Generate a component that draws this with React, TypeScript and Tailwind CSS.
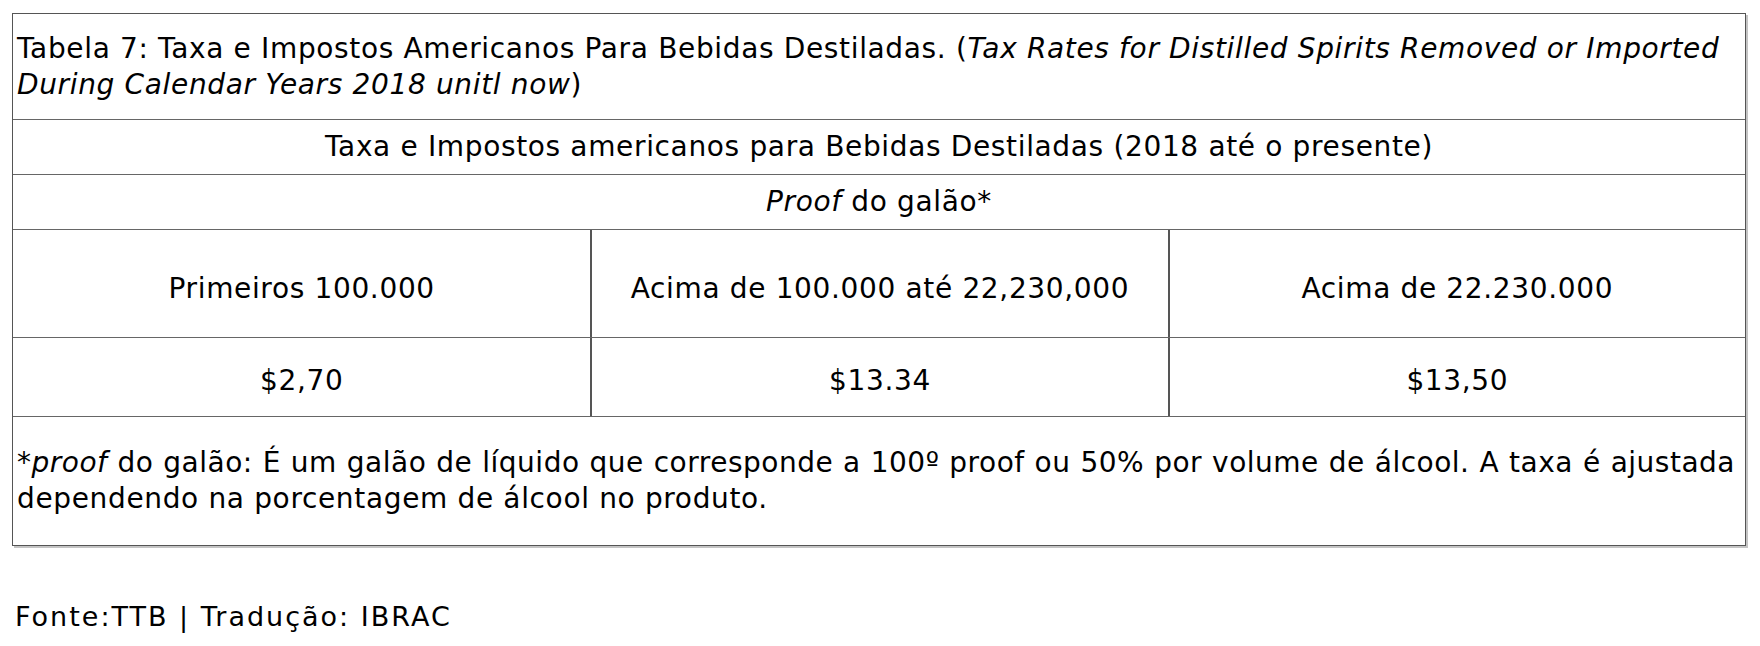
import React from "react";

export default function App() {
  return (
    <div className="w-[1760px] h-[646px] bg-white text-black overflow-hidden" style={{ fontFamily: '"DejaVu Sans", Verdana, sans-serif' }}>
      <div className="mt-[13px] ml-[12px] w-[1734px] border border-[#555] shadow-[2px_2px_0_#c4c4c4] text-[28px] leading-[36px] tracking-[0.65px]">
        <div className="h-[106px] border-b border-[#666] flex flex-col justify-center pl-[4px]">
          <div className="whitespace-nowrap">
            Tabela 7: Taxa e Impostos Americanos Para Bebidas Destiladas. (<i>Tax Rates for Distilled Spirits Removed or Imported</i>
          </div>
          <div className="whitespace-nowrap">
            <i>During Calendar Years 2018 unitl now</i>)
          </div>
        </div>
        <div className="h-[55px] border-b border-[#666] flex items-center justify-center">
          Taxa e Impostos americanos para Bebidas Destiladas (2018 até o presente)
        </div>
        <div className="h-[55px] border-b border-[#666] flex items-center justify-center">
          <span><i>Proof</i> do galão*</span>
        </div>
        <div className="h-[108px] border-b border-[#666] grid grid-cols-3">
          <div className="flex items-center justify-center pt-[10px]">Primeiros 100.000</div>
          <div className="flex items-center justify-center pt-[10px] border-l-2 border-[#555]">Acima de 100.000 até 22,230,000</div>
          <div className="flex items-center justify-center pt-[10px] border-l-2 border-[#555]">Acima de 22.230.000</div>
        </div>
        <div className="h-[79px] border-b border-[#666] grid grid-cols-3">
          <div className="flex items-center justify-center pt-[8px]">$2,70</div>
          <div className="flex items-center justify-center pt-[8px] border-l-2 border-[#555]">$13.34</div>
          <div className="flex items-center justify-center pt-[8px] border-l-2 border-[#555]">$13,50</div>
        </div>
        <div className="h-[128px] flex flex-col justify-center pl-[4px] pr-[10px]">
          <div className="[text-align-last:justify] whitespace-nowrap tracking-[0.5px]">
            *<i>proof</i> do galão: É um galão de líquido que corresponde a 100º proof ou 50% por volume de álcool. A taxa é ajustada
          </div>
          <div>dependendo na porcentagem de álcool no produto.</div>
        </div>
      </div>
      <div className="mt-[53px] pl-[15px] text-[27px] leading-[36px] tracking-[2px]">Fonte:TTB | Tradução: IBRAC</div>
    </div>
  );
}
